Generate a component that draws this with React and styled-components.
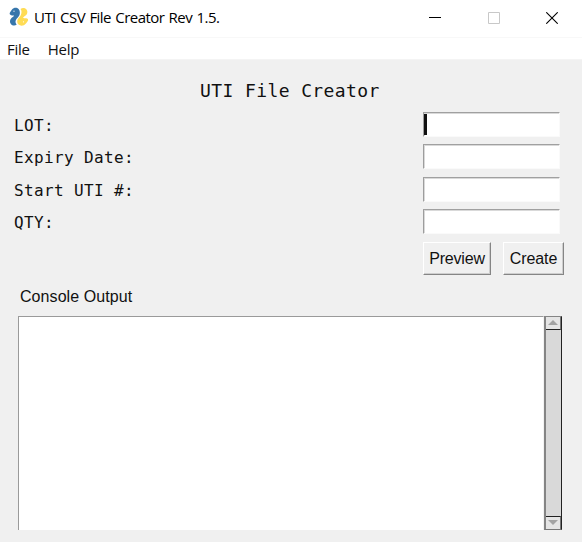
import React from "react";
import styled, { createGlobalStyle } from "styled-components";

const GlobalStyle = createGlobalStyle`
  * { box-sizing: border-box; }
  body { margin: 0; background: #f0f0f0; overflow: hidden; }
`;

const Window = styled.div`
  width: 582px;
  height: 542px;
  display: flex;
  flex-direction: column;
  background: #f0f0f0;
  color: #111;
  font-family: "Liberation Sans", Arial, sans-serif;
`;

const TitleBar = styled.header`
  height: 38px;
  flex: none;
  display: flex;
  background: #fff;
  border-bottom: 1px solid #f8f8f8;
`;

const Logo = styled.svg`
  width: 20px;
  height: 20px;
  margin: 7px 5px 0 9px;
  flex: none;
`;

const WindowTitle = styled.div`
  flex: 1;
  font: 15px/20px "Open Sans", sans-serif;
  letter-spacing: -0.55px;
  word-spacing: 1px;
  color: #000;
  padding-top: 7px;
  white-space: nowrap;
`;

const WindowButton = styled.button`
  width: 58.5px;
  height: 36px;
  padding: 0;
  border: 0;
  background: none;
  display: flex;
  align-items: center;
  justify-content: center;
  color: ${(p) => (p.$disabled ? "#c8c8c8" : "#000")};
`;

const Controls = styled.div`
  display: flex;
  width: 176px;
  flex: none;
`;

const MenuBar = styled.nav`
  height: 22px;
  flex: none;
  display: flex;
  gap: 18px;
  padding-left: 7px;
  background: #fff;
  border-bottom: 1px solid #f4f4f4;
  font: 15px/22px "Open Sans", sans-serif;
  letter-spacing: -0.25px;
`;

const Heading = styled.h1`
  margin: 20px 0 10px 200px;
  font: 18px/22px "DejaVu Sans Mono", monospace;
  letter-spacing: 0.4px;
  white-space: nowrap;
`;

const Field = styled.label`
  display: flex;
  justify-content: space-between;
  height: 26px;
  margin: 0 22px 6.4px 14px;
  font: 16px/27px "DejaVu Sans Mono", monospace;
  letter-spacing: 0.37px;
`;

const Input = styled.span`
  width: 137px;
  height: 25px;
  background: #fff;
  border: 1px solid #fafafa;
  border-top: 1px solid #a0a0a0;
  border-left: 1px solid #9d9d9d;
  box-shadow: inset 1px 1px #d9d9d9;
`;

const Caret = styled.span`
  display: block;
  width: 3px;
  height: 21px;
  margin-top: 1px;
  background: #111;
`;

const Actions = styled.div`
  display: flex;
  gap: 12px;
  height: 33px;
  margin: 0 0 0 423px;
`;

const Button = styled.button`
  width: ${(p) => p.$width}px;
  height: 33px;
  padding: 2px 0 0;
  border: 1px solid #fff;
  border-right: 1px solid #858585;
  border-bottom: 1px solid #858585;
  box-shadow: inset -1px -1px #cecece;
  background: #f0f0f0;
  color: #111;
  font: 16px/28px "Liberation Sans", Arial, sans-serif;
  letter-spacing: ${(p) => p.$tracking}px;
  white-space: nowrap;
`;

const FrameTitle = styled.div`
  margin: 12px 0 9px 20px;
  font-size: 16px;
  line-height: 20px;
  letter-spacing: 0.07px;
`;

const Console = styled.section`
  display: flex;
  width: 544px;
  height: 214px;
  margin-left: 18px;
`;

const Output = styled.div`
  flex: 1;
  background: #fff;
  border-top: 1px solid #9a9a9a;
  border-left: 1px solid #9a9a9a;
  border-right: 1px solid #f3f3f3;
`;

const ScrollBar = styled.div`
  width: 18px;
  height: 214px;
  display: flex;
  flex-direction: column;
  justify-content: space-between;
  background: #d9d9d9;
  border: 1px solid #858585;
  border-left-width: 2px;
  border-right-color: #222;
  border-bottom-color: #777;
`;

const Arrow = styled.div`
  height: 13px;
  display: flex;
  align-items: center;
  justify-content: center;
  background: #e5e5e5;
  border-right: 1px solid #777;
  border-top: ${(p) => (p.$down ? "1px solid #222" : "0")};
  border-bottom: ${(p) => (p.$down ? "0" : "1px solid #222")};
  svg { transform: ${(p) => (p.$down ? "rotate(180deg)" : "none")}; }
`;

const ArrowGlyph = () => (
  <svg width="10" height="5" viewBox="0 0 10 5">
    <path d="M0 5L5 0l5 5z" fill="#a3a3a3" />
  </svg>
);

const fields = ["LOT:", "Expiry Date:", "Start UTI #:", "QTY:"];

export default function App() {
  return (
    <Window>
      <GlobalStyle />
      <TitleBar>
        <Logo viewBox="0 0 20 20">
          <path
            d="M3 2.4C4.6.5 8 .3 9.6 2c1.6 1.7 1.5 4.6.8 6.3-.8 2-2.7 3-3.5 4.6-.7 1.5-.5 3.2.8 4.6-1.6 1.5-4.5 1.2-5.8-.6-1.3-1.7-1.2-4 .2-5.5 1.1-1.1 2.8-1.6 2.9-2.8C4.1 8.4 1.6 8.8.8 7.3.1 5.7 1.6 4.6 3 2.4z"
            fill="#3776ab"
          />
          <path
            d="M11.5 1.9c2.1-1.5 5-1 6.2.9 1.3 2.1.6 4.5-1.1 5.8-1.1.9-2.4 1.3-2.5 2.5 1.3.5 3.8-.5 4.8.9.9 1.5-.8 3.1-2.2 4.8-1.7 2.2-5.3 2.6-7.2.8-1.7-1.7-1.7-4.5-.3-6.1 1.4-1.7 2.7-2.8 3.1-5 .4-1.9.2-3.4-.8-4.6z"
            fill="#ffdc55"
          />
          <circle cx="5" cy="4.2" r=".6" fill="#fff" />
          <circle cx="14.5" cy="14.8" r=".6" fill="#fff" />
        </Logo>
        <WindowTitle>UTI CSV File Creator Rev 1.5.</WindowTitle>
        <Controls>
          <WindowButton aria-label="Minimize">
            <svg width="12" height="12">
              <path d="M0 5.5h12" stroke="currentColor" />
            </svg>
          </WindowButton>
          <WindowButton aria-label="Maximize" $disabled>
            <svg width="12" height="12">
              <path d="M.5.5h11v11H.5z" fill="none" stroke="currentColor" />
            </svg>
          </WindowButton>
          <WindowButton aria-label="Close">
            <svg width="12" height="12">
              <path d="M.3.3l11.4 11.4M11.7.3L.3 11.7" stroke="currentColor" strokeWidth="1.1" />
            </svg>
          </WindowButton>
        </Controls>
      </TitleBar>
      <MenuBar>
        <span>File</span>
        <span>Help</span>
      </MenuBar>
      <Heading>UTI File Creator</Heading>
      {fields.map((label, i) => (
        <Field key={label}>
          {label}
          <Input>{i === 0 && <Caret />}</Input>
        </Field>
      ))}
      <Actions>
        <Button $width={68} $tracking={-0.2}>Preview</Button>
        <Button $width={61} $tracking={-0.1}>Create</Button>
      </Actions>
      <FrameTitle>Console Output</FrameTitle>
      <Console>
        <Output />
        <ScrollBar>
          <Arrow><ArrowGlyph /></Arrow>
          <Arrow $down><ArrowGlyph /></Arrow>
        </ScrollBar>
      </Console>
    </Window>
  );
}
